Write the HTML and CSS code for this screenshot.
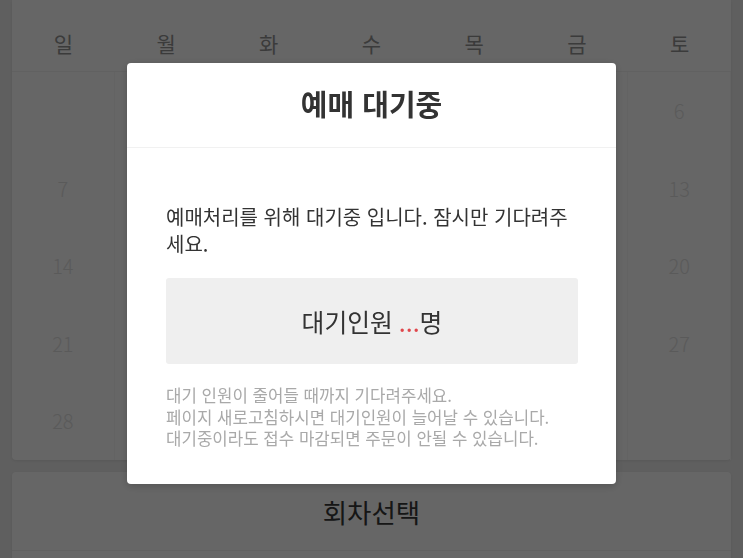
FILE: index.html
```html
<!DOCTYPE html>
<html lang="ko">
<head>
    <meta charset="utf-8">
    <title>예매 대기중</title>
    <link rel="stylesheet" href="styles.css">
</head>
<body>
    <div class="page">
        <div class="calendar">
            <div class="week-head">
                <span>일</span><span>월</span><span>화</span><span>수</span><span>목</span><span>금</span><span>토</span>
            </div>
            <!-- 팝업에 가려진 날짜는 비워둠 -->
            <div class="days">
                <span></span><span></span><span></span><span></span><span></span><span></span><span>6</span>
                <span>7</span><span></span><span></span><span></span><span></span><span></span><span>13</span>
                <span>14</span><span></span><span></span><span></span><span></span><span></span><span>20</span>
                <span>21</span><span></span><span></span><span></span><span></span><span></span><span>27</span>
                <span>28</span><span></span><span></span><span></span><span></span><span></span><span></span>
            </div>
        </div>

        <div class="round-card">
            <h2 class="round-title">회차선택</h2>
            <div class="round-body"></div>
        </div>
    </div>

    <!-- 대기 팝업 -->
    <div class="dim">
        <div class="modal">
            <div class="modal-head">
                <h1>예매 대기중</h1>
            </div>
            <div class="modal-body">
                <p class="msg">예매처리를 위해 대기중 입니다. 잠시만 기다려주세요.</p>
                <div class="wait-box">대기인원 <span class="count">...</span>명</div>
                <p class="notice">
                    대기 인원이 줄어들 때까지 기다려주세요.<br>
                    페이지 새로고침하시면 대기인원이 늘어날 수 있습니다.<br>
                    대기중이라도 접수 마감되면 주문이 안될 수 있습니다.
                </p>
            </div>
        </div>
    </div>
</body>
</html>
```

FILE: styles.css
```css
body {
    margin: 0;
    background-color: #eeeeee;
    font-family: 'Noto Sans CJK KR', 'Noto Sans', sans-serif;
    overflow: hidden;
}

.page {
    padding: 0 12px;
}

.calendar {
    background-color: #ffffff;
    border-radius: 0 0 4px 4px;
    box-shadow: 0 1px 3px rgba(0, 0, 0, 0.08);
}

.week-head {
    display: grid;
    grid-template-columns: repeat(7, 1fr);
    padding: 28px 0 13px;
    border-bottom: 1px solid #f3f3f3;
}

.week-head span {
    text-align: center;
    font-size: 21px;
    line-height: 30px;
    color: #939393;
}

.days {
    display: grid;
    grid-template-columns: repeat(7, 1fr);
    grid-auto-rows: 77.5px;
}

.days span {
    display: flex;
    align-items: center;
    justify-content: center;
    font-size: 20px;
    font-weight: 300;
    color: #e2e2e2;
    border-right: 1px solid #f8f8f8;
}

.round-card {
    margin-top: 12px;
    background-color: #ffffff;
    border-radius: 4px;
    box-shadow: 0 1px 3px rgba(0, 0, 0, 0.08);
}

.round-title {
    margin: 0;
    padding: 21px 0 20px;
    text-align: center;
    font-size: 26.5px;
    line-height: 37px;
    font-weight: normal;
    color: #383838;
    border-bottom: 1px solid #f0f0f0;
}

.round-body {
    height: 60px;
}

.dim {
    position: fixed;
    top: 0;
    left: 0;
    right: 0;
    bottom: 0;
    background-color: rgba(0, 0, 0, 0.6);
    display: flex;
    justify-content: center;
    align-items: flex-start;
    padding-top: 63px;
}

.modal {
    width: 489px;
    background-color: #ffffff;
    border-radius: 4px;
    box-shadow: 0 2px 8px rgba(0, 0, 0, 0.2);
}

.modal-head {
    padding: 24px 0 28px;
    border-bottom: 1px solid #f1f1f1;
    text-align: center;
}

.modal-head h1 {
    margin: 0;
    font-size: 29px;
    line-height: 32px;
    font-weight: bold;
    color: #333333;
}

.modal-body {
    padding: 55px 38px 34px 39px;
}

.msg {
    margin: 0;
    font-size: 20px;
    line-height: 27px;
    color: #333333;
}

.wait-box {
    margin-top: 21px;
    height: 86px;
    background-color: #efefef;
    border-radius: 3px;
    display: flex;
    align-items: center;
    justify-content: center;
    font-size: 24.8px;
    color: #333333;
}

.count {
    color: #e0474c;
    margin-left: 6px;
}

.notice {
    margin: 21px 0 0;
    font-size: 16.8px;
    line-height: 21.5px;
    color: #a9a9a9;
}
```
